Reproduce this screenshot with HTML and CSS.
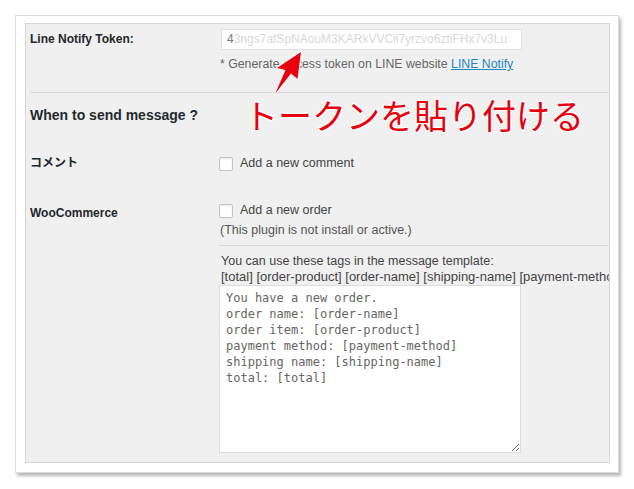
FILE: index.html
```html
<!DOCTYPE html>
<html lang="ja">
<head>
<meta charset="utf-8">
<title>LINE Notify Settings</title>
<link rel="stylesheet" href="styles.css">
</head>
<body>
<div class="card">
  <div class="panel">
    <div class="row token-row">
      <div class="label">Line Notify Token:</div>
      <div class="field">
        <div class="token-input"><span class="tok-first">4</span><span class="tok-rest">3ngs7afSpNAouM3KARkVVCii7yrzvo6ztiFHx7v3Lu</span></div>
        <p class="desc">* Generate access token on LINE website <a href="#">LINE Notify</a></p>
      </div>
    </div>

    <h2 class="section-title">When to send message ?</h2>

    <div class="row opt-row">
      <div class="label">コメント</div>
      <div class="field">
        <label class="check"><input type="checkbox"><span>Add a new comment</span></label>
      </div>
    </div>

    <div class="row woo-row">
      <div class="label label-woo">WooCommerce</div>
      <div class="field">
        <label class="check"><input type="checkbox"><span>Add a new order</span></label>
        <p class="note">(This plugin is not install or active.)</p>
        <div class="template">
          <p class="tags-intro">You can use these tags in the message template:</p>
          <p class="tags">[total] [order-product] [order-name] [shipping-name] [payment-method]</p>
          <textarea class="message" readonly>You have a new order.
order name: [order-name]
order item: [order-product]
payment method: [payment-method]
shipping name: [shipping-name]
total: [total]</textarea>
        </div>
      </div>
    </div>
  </div>
</div>

<div class="annotation">
  <svg class="arrow" width="634" height="489" viewBox="0 0 634 489">
    <polygon points="301,52 297.5,79 291,73.5 275,94 285.5,70 277,68" />
  </svg>
  <div class="callout">トークンを貼り付ける</div>
</div>
</body>
</html>
```

FILE: styles.css
```css
html, body {
  margin: 0;
  padding: 0;
  background: #fff;
}

body {
  width: 634px;
  height: 489px;
  position: relative;
  overflow: hidden;
  font-family: "Liberation Sans", Arial, "Noto Sans CJK JP", sans-serif;
  font-size: 12.5px;
  color: #444;
}

/* outer white frame with a soft drop shadow */
.card {
  box-sizing: border-box;
  width: 604px;
  margin: 15px 0 0 15px;
  padding: 7px 8px 9px 9px;
  background: #fff;
  border: 1px solid #dcdcdc;
  box-shadow: 2px 3px 3px rgba(0, 0, 0, 0.28);
}

/* grey settings panel */
.panel {
  background: #f0f0f0;
  border: 1px solid #d6d6d6;
  padding: 0 0 9px 4px;
  overflow: hidden;
}

.row {
  display: grid;
  grid-template-columns: 189px 1fr;
}

.label {
  font-weight: bold;
  font-size: 12px;
  color: #23282d;
  line-height: 20px;
}

.field p {
  margin: 0;
}

/* token row */
.token-row {
  padding: 5px 0 20px;
  border-bottom: 1px solid #dadada;
}

.token-row .label {
  line-height: 21px;
}

.token-input {
  box-sizing: border-box;
  width: 301px;
  height: 21px;
  margin-left: 2px;
  padding: 0 5px;
  background: #fff;
  border: 1px solid #e2e2e2;
  font-size: 12px;
  line-height: 19px;
  white-space: nowrap;
  overflow: hidden;
}

.tok-first {
  color: #777;
}

.tok-rest {
  color: #d9d9d9;
}

.desc {
  margin-top: 6px !important;
  line-height: 16px;
  font-size: 12.3px;
  color: #666;
  padding-left: 1px;
}

.desc a {
  color: #1e87c2;
  text-decoration: underline;
}

/* section heading */
.section-title {
  margin: 0;
  padding: 12px 0 28px;
  font-size: 14px;
  line-height: 20px;
  font-weight: bold;
  color: #23282d;
}

/* checkbox rows */
.opt-row {
  margin-bottom: 27px;
}

.check {
  display: flex;
  align-items: center;
  gap: 7px;
  height: 20px;
  line-height: 20px;
  color: #444;
}

.check input {
  appearance: none;
  -webkit-appearance: none;
  box-sizing: border-box;
  width: 14px;
  height: 14px;
  margin: 1px 0 0;
  background: #fff;
  border: 1px solid #c4c4c4;
  border-radius: 2px;
  box-shadow: inset 0 1px 2px rgba(0, 0, 0, 0.08);
}

.label-woo {
  padding-top: 3px;
}

.note {
  margin-top: 2px !important;
  line-height: 16px;
  color: #555;
  padding-left: 1px;
}

/* message template block */
.template {
  margin-top: 7px;
  border-top: 1px solid #dadada;
  padding-top: 8px;
}

.tags-intro,
.tags {
  line-height: 15px;
  padding-left: 2px;
  white-space: nowrap;
  color: #444;
}

.tags {
  font-size: 13px;
}

.message {
  display: block;
  box-sizing: border-box;
  width: 302px;
  height: 168px;
  margin: 1px 0 0;
  padding: 4px 6px;
  background: #fff;
  border: 1px solid #dcdcdc;
  border-radius: 0;
  font-family: "DejaVu Sans Mono", "Liberation Mono", monospace;
  font-size: 12px;
  line-height: 16px;
  color: #666;
  overflow: hidden;
  resize: both;
  outline: none;
}

/* red annotation laid over the form */
.annotation {
  position: absolute;
  left: 0;
  top: 0;
  width: 634px;
  height: 489px;
  pointer-events: none;
}

.arrow {
  position: absolute;
  left: 0;
  top: 0;
}

.arrow polygon {
  fill: #e8000e;
  stroke: #fff;
  stroke-width: 2;
  stroke-linejoin: round;
  paint-order: stroke;
}

.callout {
  position: absolute;
  left: 244px;
  top: 95px;
  font-family: "Noto Sans CJK JP", sans-serif;
  font-size: 34px;
  line-height: 40px;
  color: #e8000e;
  white-space: nowrap;
  text-shadow:
    1px 0 0 #fff, -1px 0 0 #fff, 0 1px 0 #fff, 0 -1px 0 #fff,
    1px 1px 0 #fff, -1px -1px 0 #fff, 1px -1px 0 #fff, -1px 1px 0 #fff;
}
```
